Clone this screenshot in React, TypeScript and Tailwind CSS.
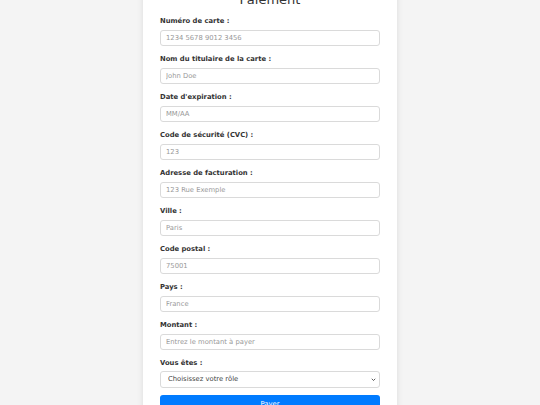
const fields = [
  { label: "Numéro de carte :", placeholder: "1234 5678 9012 3456" },
  { label: "Nom du titulaire de la carte :", placeholder: "John Doe" },
  { label: "Date d'expiration :", placeholder: "MM/AA" },
  { label: "Code de sécurité (CVC) :", placeholder: "123" },
  { label: "Adresse de facturation :", placeholder: "123 Rue Exemple" },
  { label: "Ville :", placeholder: "Paris" },
  { label: "Code postal :", placeholder: "75001" },
  { label: "Pays :", placeholder: "France" },
  { label: "Montant :", placeholder: "Entrez le montant à payer" },
];

export default function App() {
  return (
    <div className="min-h-screen overflow-hidden bg-[#f4f4f4] font-['DejaVu_Sans',sans-serif] text-[#333]">
      <div className="mx-auto mt-[-10px] w-[254px] rounded-[5px] bg-white px-[17px] pt-[5px] pb-[20px] shadow-[0_0_6px_rgba(0,0,0,0.1)]">
        <h2 className="mt-[-2px] mb-[10px] text-center text-[13px] leading-[13px] font-normal text-[#333]">Paiement</h2>
        <form>
          {fields.map((f) => (
            <div key={f.label} className="mb-[8px]">
              <label className="mb-[4px] block text-[6.8px] leading-[10px] font-bold text-[#333]">{f.label}</label>
              <input
                type="text"
                placeholder={f.placeholder}
                className="block h-[16px] w-full rounded-[3px] border border-[#dadada] px-[5px] text-[6.8px] outline-none placeholder:text-[#999]"
              />
            </div>
          ))}
          <div className="mb-[7px]">
            <label className="mb-[3px] block text-[6.8px] leading-[10px] font-bold text-[#333]">Vous êtes :</label>
            <div className="relative">
              <select className="block h-[17px] w-full appearance-none rounded-[3px] border border-[#dadada] bg-white px-[7px] text-[6.8px] text-[#444] outline-none">
                <option>Choisissez votre rôle</option>
              </select>
              <svg viewBox="0 0 10 10" className="pointer-events-none absolute top-[6px] right-[4px] h-[5px] w-[5px]">
                <path d="M1.5 3.5 L5 7 L8.5 3.5" fill="none" stroke="#333" strokeWidth="1.6" />
              </svg>
            </div>
          </div>
          <button type="button" className="block h-[18px] w-full rounded-[3px] bg-[#007bff] text-[6.8px] text-white">
            Payer
          </button>
        </form>
      </div>
    </div>
  );
}
